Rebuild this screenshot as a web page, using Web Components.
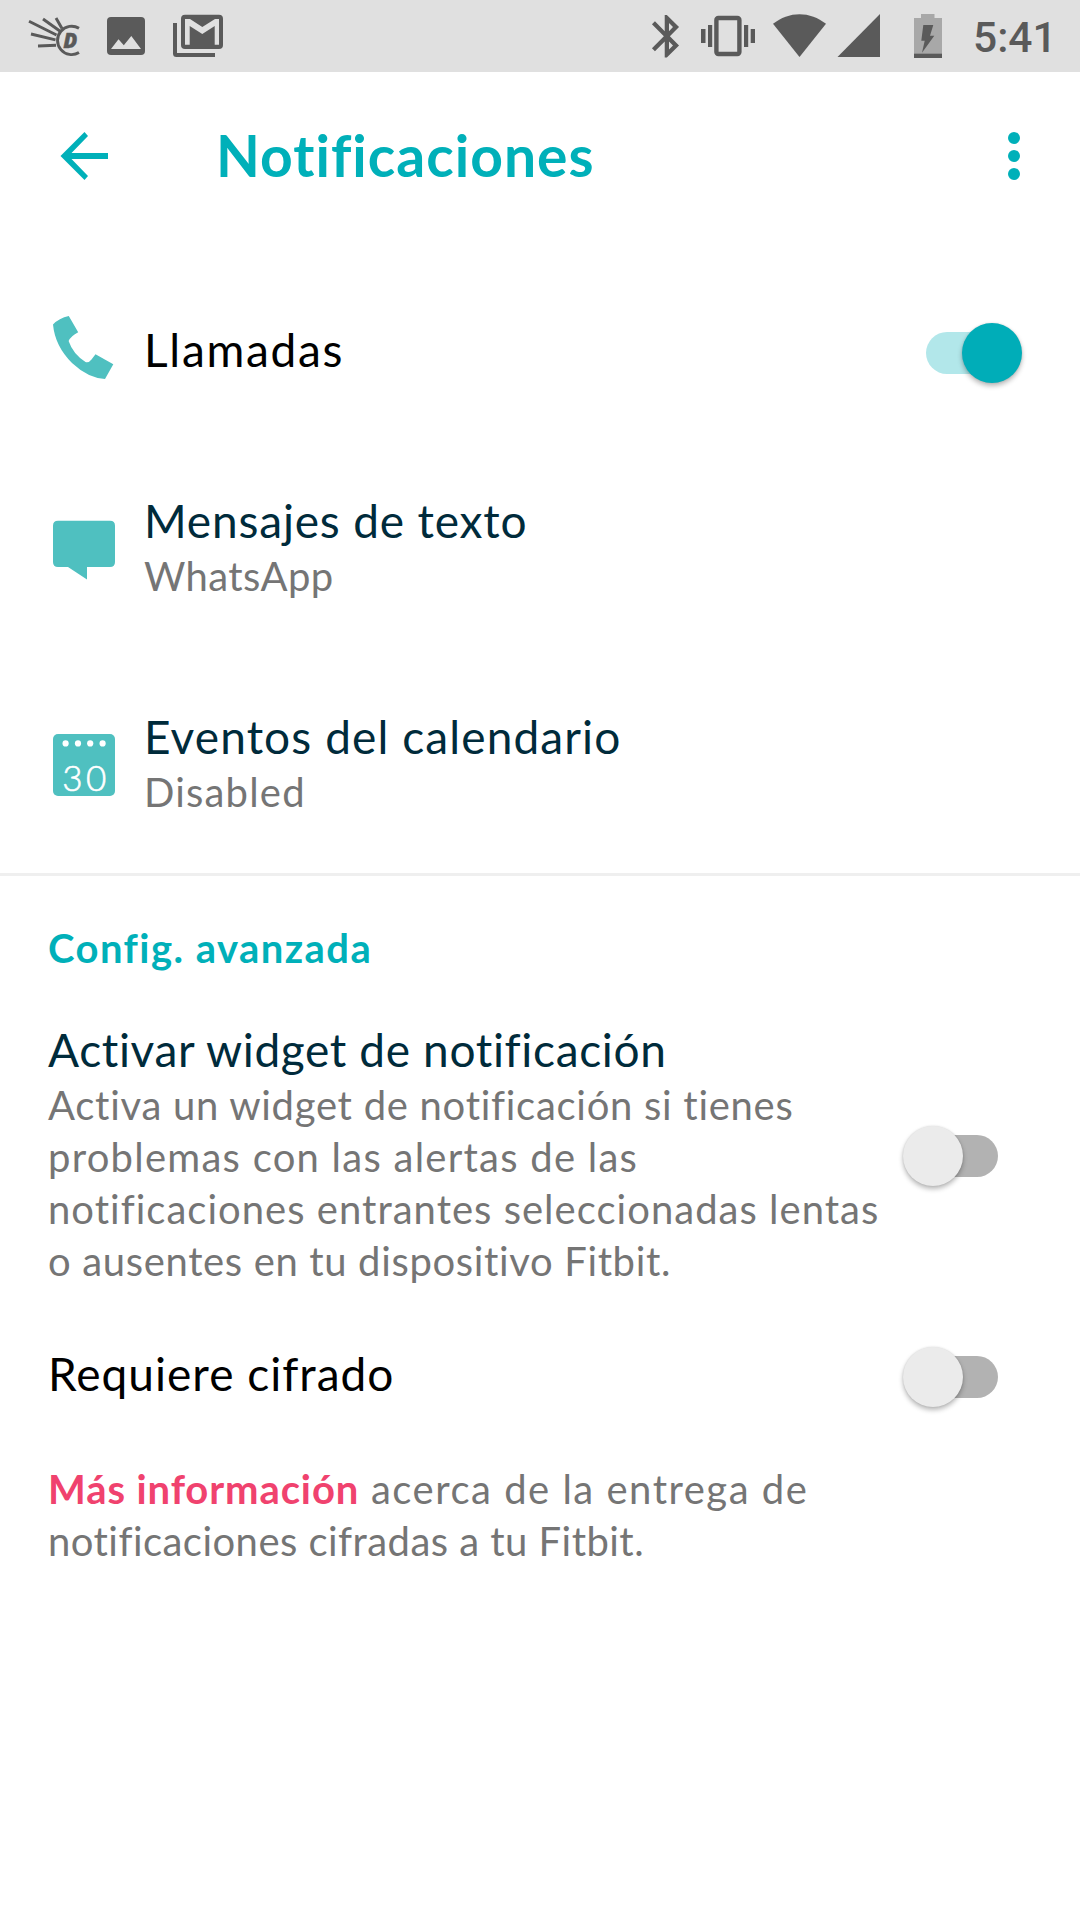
<!DOCTYPE html>
<html lang="es">
<head>
<meta charset="utf-8">
<title>Notificaciones</title>
<style>
  body {
    margin: 0;
    background: #fff;
    font-family: Lato, "Open Sans", sans-serif;
    font-kerning: normal;
  }

  .settings {
    padding-top: 20px;
  }

  .advanced {
    display: flex;
    flex-direction: column;
    padding: 46px 82px 0 48px;
    border-top: 3px solid #efefef;
    margin-top: 2px;
  }

  .advanced h2 {
    margin: 0 0 47px;
    font-size: 40px;
    line-height: 52px;
    font-weight: 700;
    color: #00b0b9;
  }

  .line {
    display: block;
    white-space: nowrap;
    letter-spacing: var(--track, 1px);
  }

  .more {
    margin: 60px 0 0;
    font-size: 40px;
    line-height: 52px;
    color: #757575;
  }

  .more b {
    color: #f0426e;
    letter-spacing: 0.9px;
  }
</style>
</head>
<body>
<status-bar time="5:41"></status-bar>
<app-header>Notificaciones</app-header>

<main>
  <div class="settings">
    <setting-row icon="phone" short>
      <span class="line" style="--track: 1.7px">Llamadas</span>
      <toggle-switch slot="action" checked></toggle-switch>
    </setting-row>
    <setting-row icon="message" link>
      <span class="line" style="--track: 0.83px">Mensajes de texto</span>
      <span class="line" slot="detail" style="--track: 0.4px">WhatsApp</span>
    </setting-row>
    <setting-row icon="calendar" link>
      <span class="line" style="--track: 1.1px">Eventos del calendario</span>
      <span class="line" slot="detail" style="--track: 1.2px">Disabled</span>
    </setting-row>
  </div>

  <section class="advanced">
    <h2><span class="line" style="--track: 1.45px">Config. avanzada</span></h2>
    <setting-row plain link>
      <span class="line" style="--track: 0.65px">Activar widget de notificación</span>
      <span class="line" slot="detail" style="--track: 0.72px">Activa un widget de notificación si tienes</span>
      <span class="line" slot="detail" style="--track: 1.25px">problemas con las alertas de las</span>
      <span class="line" slot="detail" style="--track: 1.02px">notificaciones entrantes seleccionadas lentas</span>
      <span class="line" slot="detail" style="--track: 0.65px">o ausentes en tu dispositivo Fitbit.</span>
      <toggle-switch slot="action"></toggle-switch>
    </setting-row>
    <setting-row plain style="margin-top: 58px">
      <span class="line" style="--track: 1px">Requiere cifrado</span>
      <toggle-switch slot="action"></toggle-switch>
    </setting-row>
    <p class="more">
      <span class="line" style="--track: 1.5px"><b>Más información</b> acerca de la entrega de</span>
      <span class="line" style="--track: 0.46px">notificaciones cifradas a tu Fitbit.</span>
    </p>
  </section>
</main>

<script>
const ICONS = {
  phone: `
    <svg width="64" height="64" viewBox="52 316 64 64">
      <path fill="#4fc0c0" d="M53 324.5Q59 318 68.8 316L78.2 332.3Q71 336 68.6 341Q73 354 85.5 362Q89 363 91.5 359.5L95.5 354.3L113.3 364.3L105 379Q88 378 72 363Q55 346 53 324.5Z"/>
    </svg>`,
  message: `
    <svg width="64" height="64" viewBox="52 518 64 64">
      <path fill="#4fc0c0" d="M58 520.7H110Q115 520.7 115 525.7V562Q115 567 110 567H87V579.5L68 567H58Q53 567 53 562V525.7Q53 520.7 58 520.7Z"/>
    </svg>`,
  calendar: `
    <svg width="64" height="64" viewBox="52 734 64 64">
      <rect x="53" y="734" width="62" height="62" rx="5" fill="#4fc0c0"/>
      <g fill="#fff">
        <circle cx="65.6" cy="743.4" r="3.1"/>
        <circle cx="78" cy="743.4" r="3.1"/>
        <circle cx="90.2" cy="743.4" r="3.1"/>
        <circle cx="102.6" cy="743.4" r="3.1"/>
        <text x="86" y="790.5" font-family="Lato" font-size="35" font-weight="300" letter-spacing="3.5" text-anchor="middle" stroke="#fff" stroke-width="0.6">30</text>
      </g>
    </svg>`,
};

class StatusBar extends HTMLElement {
  constructor() {
    super();
    this.attachShadow({ mode: "open" });
    this.shadowRoot.innerHTML = `
      <style>
        :host {
          display: flex;
          height: 72px;
          background: #e0e0e0;
          color: #5a5a5a;
          fill: #5a5a5a;
        }

        svg {
          flex: none;
        }

        .time {
          margin-left: 23px;
          font: 500 42.5px/75px Roboto, sans-serif;
        }

        .gap {
          flex: none;
          width: 397px;
        }
      </style>
      <svg width="93" height="72" viewBox="0 0 93 72">
        <g fill="none" stroke="#5a5a5a" stroke-width="2.9">
          <path d="M79 28.2A14.2 14.2 0 1 0 79 52.6"/>
          <path d="M29 21.3L56.5 35M43 19L60.5 31.5M56 18L62 28.5M31 34L55.5 39.8M38 46L56 45.2"/>
        </g>
        <text x="63.3" y="47.5" font-family="Open Sans" font-size="20.5" font-weight="800" font-style="italic" stroke="#5a5a5a" stroke-width="0.4">D</text>
      </svg>
      <svg width="67" height="72" viewBox="93 0 67 72">
        <rect x="107" y="17" width="38" height="38" rx="4"/>
        <path fill="#e0e0e0" d="M111 49L118.5 39.3L123.8 45.3L131.3 36L141 49Z"/>
      </svg>
      <svg width="80" height="72" viewBox="160 0 80 72">
        <path d="M173 23H177V53H215V57H176.5Q173 57 173 53.5Z"/>
        <rect x="181" y="14.7" width="42" height="34.3" rx="4"/>
        <path fill="#e0e0e0" d="M185 44.7V19H190L202.3 27L215 19H219V44.7H214.7V26L202.3 34L189.7 26V44.7Z"/>
      </svg>
      <div class="gap"></div>
      <svg width="53" height="72" viewBox="637 0 53 72">
        <path transform="translate(641.3 10.7) scale(2.13)" d="M17.71 7.71L12 2h-1v7.59L6.41 5 5 6.41 10.59 12 5 17.59 6.41 19 11 14.41V22h1l5.71-5.71-4.3-4.29 4.3-4.29zM13 5.83l1.88 1.88L13 9.59V5.83zm1.88 10.46L13 18.17v-3.76l1.88 1.88z"/>
      </svg>
      <svg width="74" height="72" viewBox="690 0 74 72">
        <rect x="716.4" y="18" width="23" height="36" rx="2" fill="none" stroke="#5a5a5a" stroke-width="4.4"/>
        <path d="M701 29H705.5V43H701ZM708 25H712.2V47H708ZM744 25H748.2V47H744ZM750.7 29H755V43H750.7Z"/>
      </svg>
      <svg width="67" height="72" viewBox="764 0 67 72">
        <path d="M773 23.8C781 17.5 790 14.2 799.5 14.2S818 17.5 826 23.8L799.5 57Z"/>
      </svg>
      <svg width="65" height="72" viewBox="831 0 65 72">
        <path d="M837.5 57L880 14V57Z"/>
      </svg>
      <svg width="54" height="72" viewBox="896 0 54 72">
        <path fill="#a8a8a8" d="M914 18H921V14H934.5V18H942V53.5H914Z"/>
        <path d="M914 53.5H942V58H914ZM923.3 25H933.3L930 35.7H934.3L922 52.7L924.7 40.7H921.3Z"/>
      </svg>
      <span class="time"></span>
    `;
    this.shadowRoot.querySelector(".time").textContent = this.getAttribute("time");
  }
}

class AppHeader extends HTMLElement {
  constructor() {
    super();
    this.attachShadow({ mode: "open" });
    this.shadowRoot.innerHTML = `
      <style>
        :host {
          display: flex;
          align-items: center;
          height: 168px;
          padding: 0 60px;
          color: #00b0b9;
        }

        h1 {
          flex: 1;
          margin: 0;
          padding: 0 0 3px 108px;
          font-size: 57px;
          line-height: 68px;
          font-weight: 700;
          letter-spacing: 1px;
        }
      </style>
      <svg width="48" height="50" viewBox="0 0 48 50">
        <path d="M24.5 1L28 5L11.5 22H48V28H11.5L28 45L24.5 49L.5 25Z" fill="currentColor"/>
      </svg>
      <h1><slot></slot></h1>
      <svg width="12" height="48" viewBox="0 0 12 48" fill="currentColor">
        <circle cx="6" cy="6" r="6"/>
        <circle cx="6" cy="24" r="6"/>
        <circle cx="6" cy="42" r="6"/>
      </svg>
    `;
  }
}

class ToggleSwitch extends HTMLElement {
  constructor() {
    super();
    this.attachShadow({ mode: "open" });
    this.shadowRoot.innerHTML = `
      <style>
        :host {
          display: flex;
          align-items: center;
          width: 90px;
          height: 42px;
          margin-left: 6px;
          border-radius: 21px;
          background: #b2b2b2;
        }

        i {
          flex: none;
          width: 60px;
          height: 60px;
          margin-left: -5.5px;
          border-radius: 50%;
          background: #ebebeb;
          box-shadow: 0 3px 5px rgba(0, 0, 0, 0.28), 0 0 2px rgba(0, 0, 0, 0.12);
        }

        :host([checked]) {
          margin: 0 6px 0 0;
          background: #b2e7ea;
        }

        :host([checked]) i {
          margin-left: 35.5px;
          background: #00adb8;
        }
      </style>
      <i></i>
    `;
  }
}

class SettingRow extends HTMLElement {
  constructor() {
    super();
    this.attachShadow({ mode: "open" });
    this.shadowRoot.innerHTML = `
      <style>
        :host {
          display: flex;
          align-items: center;
          height: 216px;
          padding: 0 58px 0 52px;
          color: #000;
        }

        :host([short]) {
          height: 179px;
        }

        :host([plain]) {
          height: auto;
          padding: 0;
        }

        :host([link]) {
          color: #002b3b;
        }

        .icon {
          display: flex;
          width: 92px;
          padding-top: 5px;
        }

        :host([short]) .icon {
          padding: 0 0 3px;
        }

        :host([plain]) .icon {
          display: none;
        }

        .text {
          flex: 1;
          min-width: 0;
        }

        .title {
          font-size: 46px;
          line-height: 58px;
        }

        .detail {
          font-size: 40px;
          line-height: 52px;
          color: #757575;
        }

        .action {
          padding-top: 5px;
        }

        :host([short]) .action {
          padding-top: 7px;
        }

        :host([plain][link]) .action {
          padding-top: 4px;
        }
      </style>
      <div class="icon">${ICONS[this.getAttribute("icon")] || ""}</div>
      <div class="text">
        <div class="title"><slot></slot></div>
        <div class="detail"><slot name="detail"></slot></div>
      </div>
      <div class="action"><slot name="action"></slot></div>
    `;
  }
}

customElements.define("status-bar", StatusBar);
customElements.define("app-header", AppHeader);
customElements.define("toggle-switch", ToggleSwitch);
customElements.define("setting-row", SettingRow);
</script>
</body>
</html>
